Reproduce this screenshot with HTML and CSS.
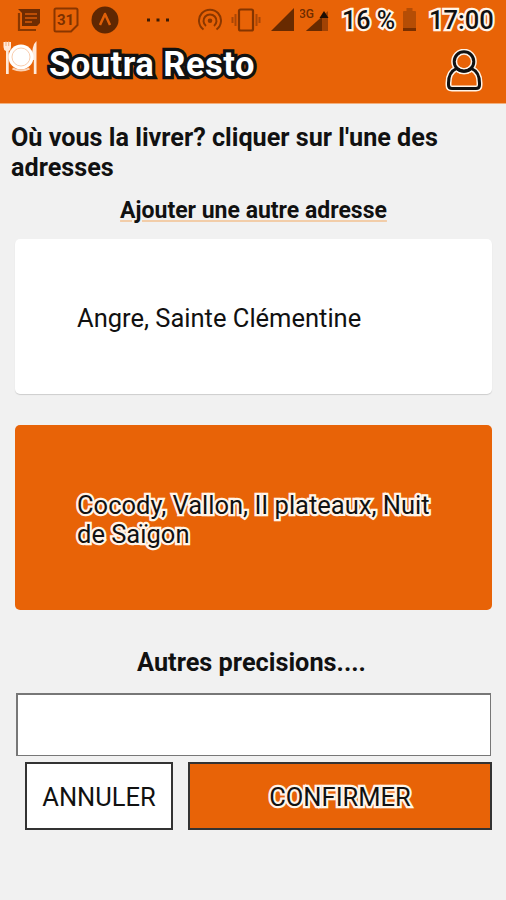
FILE: index.html
```html
<!DOCTYPE html>
<html lang="fr">
<head>
    <meta charset="utf-8">
    <meta name="viewport" content="width=device-width, initial-scale=1">
    <title>Soutra Resto</title>
    <link rel="stylesheet" href="styles.css">
</head>
<body>

    <header class="header">
        <div class="status-bar">
            <svg class="icon-news" width="24" height="24" viewBox="0 0 24 24">
                <path d="M2 5v17h17" fill="none" stroke="#8a3800" stroke-width="2.2"/>
                <path d="M1 1h22v14l-3 3H5V5z" fill="#6f2c02"/>
                <path d="M8 6h12M8 10h12M8 14h7" stroke="#d65a08" stroke-width="1.6"/>
            </svg>
            <svg class="icon-calendar" width="26" height="26" viewBox="0 0 26 26">
                <path d="M3 1.5h20q1.5 0 1.5 1.5v15l-6.500 6.500H3q-1.500 0-1.500-1.500V3Q1.500 1.500 3 1.500z" fill="none" stroke="#893600" stroke-width="2"/>
                <text class="day" x="12.500" y="17.500" text-anchor="middle">31</text>
            </svg>
            <svg class="icon-expo" width="28" height="28" viewBox="0 0 28 28">
                <circle cx="14" cy="14" r="13.500" fill="#5f2702"/>
                <path d="M9 19l5-11 5 11" fill="none" stroke="#e06008" stroke-width="2.500" stroke-linejoin="round"/>
            </svg>
            <svg class="icon-more" width="24" height="6" viewBox="0 0 24 6">
                <path d="M1 1.500h3v3H1zM10.500 1.500h3v3h-3zM20 1.500h3v3h-3z" fill="#3c1a04"/>
            </svg>
            <svg class="icon-hotspot" width="24" height="24" viewBox="0 0 24 24">
                <g fill="none" stroke="#8a3700" stroke-width="2">
                    <path d="M5.500 21.500a11 11 0 1 1 13 0"/>
                    <path d="M8 18a6.500 6.500 0 1 1 8 0"/>
                </g>
                <circle cx="12" cy="12.700" r="2.300" fill="#8a3700"/>
            </svg>
            <svg class="icon-vibrate" width="30" height="24" viewBox="0 0 30 24">
                <rect x="8" y="1.500" width="14" height="21" rx="1.500" fill="none" stroke="#843500" stroke-width="2.200"/>
                <path d="M4.500 6v12M25.500 6v12M1.500 9v6M28.500 9v6" stroke="#a94706" stroke-width="2"/>
            </svg>
            <svg class="icon-signal" width="23" height="23" viewBox="0 0 23 23">
                <path d="M23 0v23H0z" fill="#682a00"/>
            </svg>
            <svg class="icon-3g" width="30" height="24" viewBox="0 0 30 24">
                <path d="M28 3v20H6z" fill="#a14204"/>
                <path d="M22 9v14H6z" fill="#682a00"/>
                <path d="M24 3l4.500 7h-9z" fill="#1d0d03"/>
                <text class="network" x="-1" y="9.500">3G</text>
            </svg>
            <span class="battery-level halo">16 %</span>
            <svg class="icon-battery" width="13" height="24" viewBox="0 0 13 24">
                <path d="M3.500 0h6v3H12q1 0 1 1v16H0V4q0-1 1-1h2.500z" fill="#b54d05"/>
                <path d="M0 20h13v3H0z" fill="#792f00"/>
            </svg>
            <span class="clock halo">17:00</span>
        </div>

        <div class="title-bar">
            <svg class="logo" width="35" height="36" viewBox="0 0 35 36">
                <path d="M.5 2h7.500v5q0 3-2.300 4v23H3V11Q.500 10 .500 7z" fill="#ffe9d9"/>
                <path d="M3 1v5M5.700 1v5" stroke="#f0a066" stroke-width=".8"/>
                <path d="M33.500 1v33h-2.700V20h-1.800Q28.500 5 33.500 1z" fill="#ffe9d9"/>
                <circle cx="18" cy="17" r="12.500" fill="#fff"/>
                <circle cx="18" cy="17" r="9" fill="none" stroke="#f9cdae"/>
                <path d="M9.500 28.500q8.500 4 17 0" fill="none" stroke="#fbd2b5" stroke-width="2"/>
            </svg>
            <h1 class="title">Soutra Resto</h1>
            <svg class="icon-user" width="38" height="43" viewBox="0 0 38 43">
                <g class="user-halo">
                    <circle cx="19" cy="12.500" r="9.800"/>
                    <path d="M11.500 19.500Q3.500 23 3.500 34v2q0 3.500 3.500 3.500h24q3.500 0 3.500-3.500v-2q0-11-8-14.500q-7.500 5.500-15 0z"/>
                </g>
                <g class="user-line">
                    <circle cx="19" cy="12.500" r="9.800"/>
                    <path d="M11.500 19.500Q3.500 23 3.500 34v2q0 3.500 3.500 3.500h24q3.500 0 3.500-3.500v-2q0-11-8-14.500q-7.500 5.500-15 0z"/>
                </g>
            </svg>
        </div>
    </header>

    <main class="main">
        <h2 class="question">Où vous la livrer? cliquer sur l'une des adresses</h2>
        <a href="#" class="add-address">Ajouter une autre adresse</a>

        <div class="address">
            <p class="address-text">Angre, Sainte Clémentine</p>
        </div>
        <div class="address selected">
            <p class="address-text halo">Cocody, Vallon, II plateaux, Nuit de Saïgon</p>
        </div>

        <label class="precisions-label" for="precisions">Autres precisions....</label>
        <input class="precisions" id="precisions" type="text">

        <div class="buttons">
            <button class="btn cancel" type="button"><span class="btn-text">ANNULER</span></button>
            <button class="btn confirm" type="button"><span class="btn-text halo">CONFIRMER</span></button>
        </div>
    </main>

</body>
</html>
```

FILE: styles.css
```css
* {
    box-sizing: border-box;
    margin: 0;
    padding: 0;
}
body {
    min-height: 900px;
    background: #f1f1f1;
    color: #111;
    font-family: Roboto, sans-serif;
    font-size: 25.5px;
    line-height: 29px;
}
svg {
    display: block;
    flex: none;
}
.halo {
    -webkit-text-stroke: 4.5px #fff4e8;
    paint-order: stroke fill;
    stroke-linejoin: round;
}

/* header */
.header {
    height: 104px;
    background: #e86307;
    border-bottom: 1px solid #f2b07d;
}
.status-bar {
    display: flex;
    align-items: center;
    height: 39px;
    padding-left: 17px;
    white-space: nowrap;
}
.icon-calendar {
    margin-left: 12px;
}
.icon-expo {
    margin-left: 12px;
}
.icon-more {
    margin-left: 27px;
}
.icon-hotspot {
    margin-left: 28px;
}
.icon-vibrate {
    margin-left: 9px;
}
.icon-signal {
    margin-left: 10px;
}
.icon-3g {
    margin-left: 6px;
}
.day {
    font-size: 15px;
    font-weight: 700;
    fill: #7c3000;
}
.network {
    font-size: 12px;
    font-weight: 500;
    fill: #6f2c00;
}
.battery-level {
    width: 56px;
    margin: 2px 0 0 12px;
    font-size: 25px;
    font-weight: 500;
}
.icon-battery {
    margin-left: 5px;
}
.clock {
    margin: 2px 0 0 13px;
    font-size: 25.5px;
    font-weight: 500;
}
.title-bar {
    display: flex;
    align-items: flex-start;
    padding-left: 3px;
}
.logo {
    margin-top: 1px;
}
.title {
    margin: 7px 0 0 11px;
    font-size: 34.5px;
    line-height: 36px;
    font-weight: 700;
    letter-spacing: .5px;
    color: #fff;
    -webkit-text-stroke: 6.5px #111;
    paint-order: stroke fill;
    stroke-linejoin: round;
}
.icon-user {
    margin: 10px 23px 0 auto;
}
.user-halo {
    fill: none;
    stroke: #fff4e8;
    stroke-width: 6px;
}
.user-line {
    fill: none;
    stroke: #111;
    stroke-width: 3px;
}

/* addresses */
.main {
    display: flex;
    flex-direction: column;
    padding: 19px 14px 0 15px;
}
.question {
    margin-left: -4px;
    font-size: 25.2px;
    line-height: 29.5px;
    font-weight: 700;
}
.add-address {
    align-self: center;
    margin-top: 15px;
    font-size: 23px;
    line-height: 27px;
    font-weight: 700;
    color: #111;
    text-decoration: underline;
    text-decoration-color: #f2cda9;
    text-decoration-thickness: 2px;
    text-underline-offset: 2px;
}
.address {
    display: flex;
    align-items: center;
    height: 155px;
    margin-top: 15px;
    padding: 4px 55px 0 62px;
    border-radius: 5px;
    background: #fff;
    box-shadow: 0 1px 1px rgba(0, 0, 0, .15);
}
.selected {
    height: 185px;
    margin-top: 31px;
    background: #e86307;
    box-shadow: none;
}

/* precisions */
.precisions-label {
    align-self: center;
    margin: 38px 4px 0 0;
    font-size: 25.3px;
    font-weight: 700;
}
.precisions {
    height: 63px;
    margin: 16px 1px 0;
    padding: 0 12px;
    border: 1px solid #777;
    border-width: 2px 1px 1px 2px;
    background: #fff;
    font: inherit;
}
.buttons {
    display: flex;
    gap: 15px;
    margin: 6px 0 0 10px;
}
.btn {
    height: 68px;
    padding-top: 2px;
    border: 2px solid #333;
    background: #fff;
    color: #111;
    font: inherit;
}
.cancel {
    width: 148px;
}
.confirm {
    flex: 1;
    background: #e86307;
}
```
